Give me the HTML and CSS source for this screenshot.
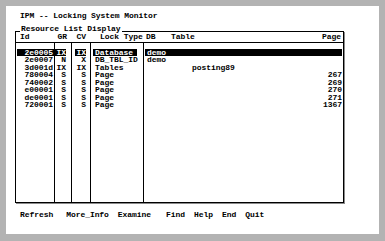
FILE: index.html
```html
<!DOCTYPE html>
<html lang="en">
<head>
  <meta charset="UTF-8">
  <meta name="viewport" content="width=device-width, initial-scale=1.0">
  <title>IPM -- Locking System Monitor</title>
  <link rel="stylesheet" href="styles.css">
</head>
<body>
  <div class="screen">
    <div class="title">IPM -- Locking System Monitor</div>

    <div class="panel">
      <div class="legend"><span>Resource List Display</span></div>
      <div class="head">
        <span class="h-id">Id</span>
        <span class="h-gr">GR</span>
        <span class="h-cv">CV</span>
        <span class="h-lock">Lock Type</span>
        <span class="h-rest"><span class="h-db">DB</span><span>Table</span><span class="h-page">Page</span></span>
      </div>
      <div class="body">
        <div class="col c-id">
          <div class="cell sel">2e0005</div>
          <div class="cell">2e0007</div>
          <div class="cell">3d001d</div>
          <div class="cell">780004</div>
          <div class="cell">740002</div>
          <div class="cell">e00001</div>
          <div class="cell">de0001</div>
          <div class="cell">720001</div>
        </div>
        <div class="col c-gr">
          <div class="cell sel">IX</div>
          <div class="cell">N</div>
          <div class="cell">IX</div>
          <div class="cell">S</div>
          <div class="cell">S</div>
          <div class="cell">S</div>
          <div class="cell">S</div>
          <div class="cell">S</div>
        </div>
        <div class="col c-cv">
          <div class="cell sel">IX</div>
          <div class="cell">X</div>
          <div class="cell">IX</div>
          <div class="cell">S</div>
          <div class="cell">S</div>
          <div class="cell">S</div>
          <div class="cell">S</div>
          <div class="cell">S</div>
        </div>
        <div class="col c-lock">
          <div class="cell sel">Database</div>
          <div class="cell">DB_TBL_ID</div>
          <div class="cell">Tables</div>
          <div class="cell">Page</div>
          <div class="cell">Page</div>
          <div class="cell">Page</div>
          <div class="cell">Page</div>
          <div class="cell">Page</div>
        </div>
        <div class="col c-rest">
          <div class="cell sel"><span class="db">demo</span><span class="tbl"></span><span class="page"></span></div>
          <div class="cell"><span class="db">demo</span><span class="tbl"></span><span class="page"></span></div>
          <div class="cell"><span class="db"></span><span class="tbl">posting89</span><span class="page"></span></div>
          <div class="cell"><span class="db"></span><span class="tbl"></span><span class="page">267</span></div>
          <div class="cell"><span class="db"></span><span class="tbl"></span><span class="page">269</span></div>
          <div class="cell"><span class="db"></span><span class="tbl"></span><span class="page">270</span></div>
          <div class="cell"><span class="db"></span><span class="tbl"></span><span class="page">271</span></div>
          <div class="cell"><span class="db"></span><span class="tbl"></span><span class="page">1367</span></div>
        </div>
      </div>
    </div>

    <div class="keys">
      <span>Refresh</span>
      <span class="wide">More_Info</span>
      <span>Examine</span>
      <span class="wider">Find</span>
      <span>Help</span>
      <span>End</span>
      <span>Quit</span>
    </div>
  </div>
</body>
</html>
```

FILE: styles.css
```css
body {
  margin: 0;
  background: #b3b3b3;
  font: bold 8px/8px "Liberation Mono", "Courier New", monospace;
  letter-spacing: -0.06px;
  color: #000;
}

.screen {
  margin: 6px;
  width: 373px;
  height: 228px;
  box-sizing: border-box;
  padding-top: 6px;
  background: #fff;
  overflow: hidden;
}

.title {
  margin-left: 14px;
  height: 8px;
}

.panel {
  margin: 11px 0 0 9px;
  width: 329px;
  height: 172px;
  box-sizing: border-box;
  border: 1px solid #000;
  box-shadow: 1px 1px 0 #8a8a8a;
  display: flex;
  flex-direction: column;
}

.legend {
  height: 8px;
  margin: -7px 0 -1px 4px;
}

.legend span {
  background: #fff;
  padding: 0 1px;
}

.head {
  display: flex;
  flex-shrink: 0;
  height: 11px;
  box-sizing: border-box;
  padding-top: 1px;
  border-bottom: 1px solid #000;
}

.head > span {
  flex-shrink: 0;
  box-sizing: border-box;
}

.h-id {
  width: 39px;
  padding-left: 4px;
}

.h-gr {
  width: 17px;
  padding-right: 5px;
  text-align: right;
}

.h-cv {
  width: 19px;
  padding-right: 5px;
  text-align: right;
}

.h-lock {
  width: 53px;
  padding-left: 9px;
}

.h-rest {
  width: 198px;
  display: flex;
  padding: 0 1px 0 2px;
}

.h-db {
  width: 25px;
}

.h-page {
  margin-left: auto;
}

.body {
  flex: 1;
  display: flex;
}

.col {
  flex-shrink: 0;
  border-right: 1px solid #000;
  padding-top: 5.5px;
  line-height: 7.5px;
}

.col:last-child {
  border-right: 0;
}

.cell {
  height: 7.5px;
  white-space: pre;
}

.sel {
  background: #000;
  color: #fff;
}

.c-id {
  width: 38px;
}

.c-id .cell {
  margin-left: 1px;
  padding-right: 1px;
  text-align: right;
}

.c-gr {
  width: 16px;
}

.c-gr .cell {
  width: 11px;
  text-align: right;
}

.c-cv {
  width: 18px;
}

.c-cv .cell {
  width: 11px;
  margin-left: 3px;
  text-align: right;
}

.c-lock {
  width: 52px;
}

.c-lock .cell {
  width: 42px;
  margin-left: 2px;
  padding-left: 2px;
}

.c-rest {
  width: 199px;
}

.c-rest .cell {
  display: flex;
  margin: 0 1px;
  padding-left: 2px;
}

.db {
  width: 45px;
}

.page {
  margin-left: auto;
}

.keys {
  display: flex;
  gap: 9px;
  margin: 8px 0 0 14px;
}

.keys .wide {
  margin-left: 4px;
}

.keys .wider {
  margin-left: 6px;
}
```
